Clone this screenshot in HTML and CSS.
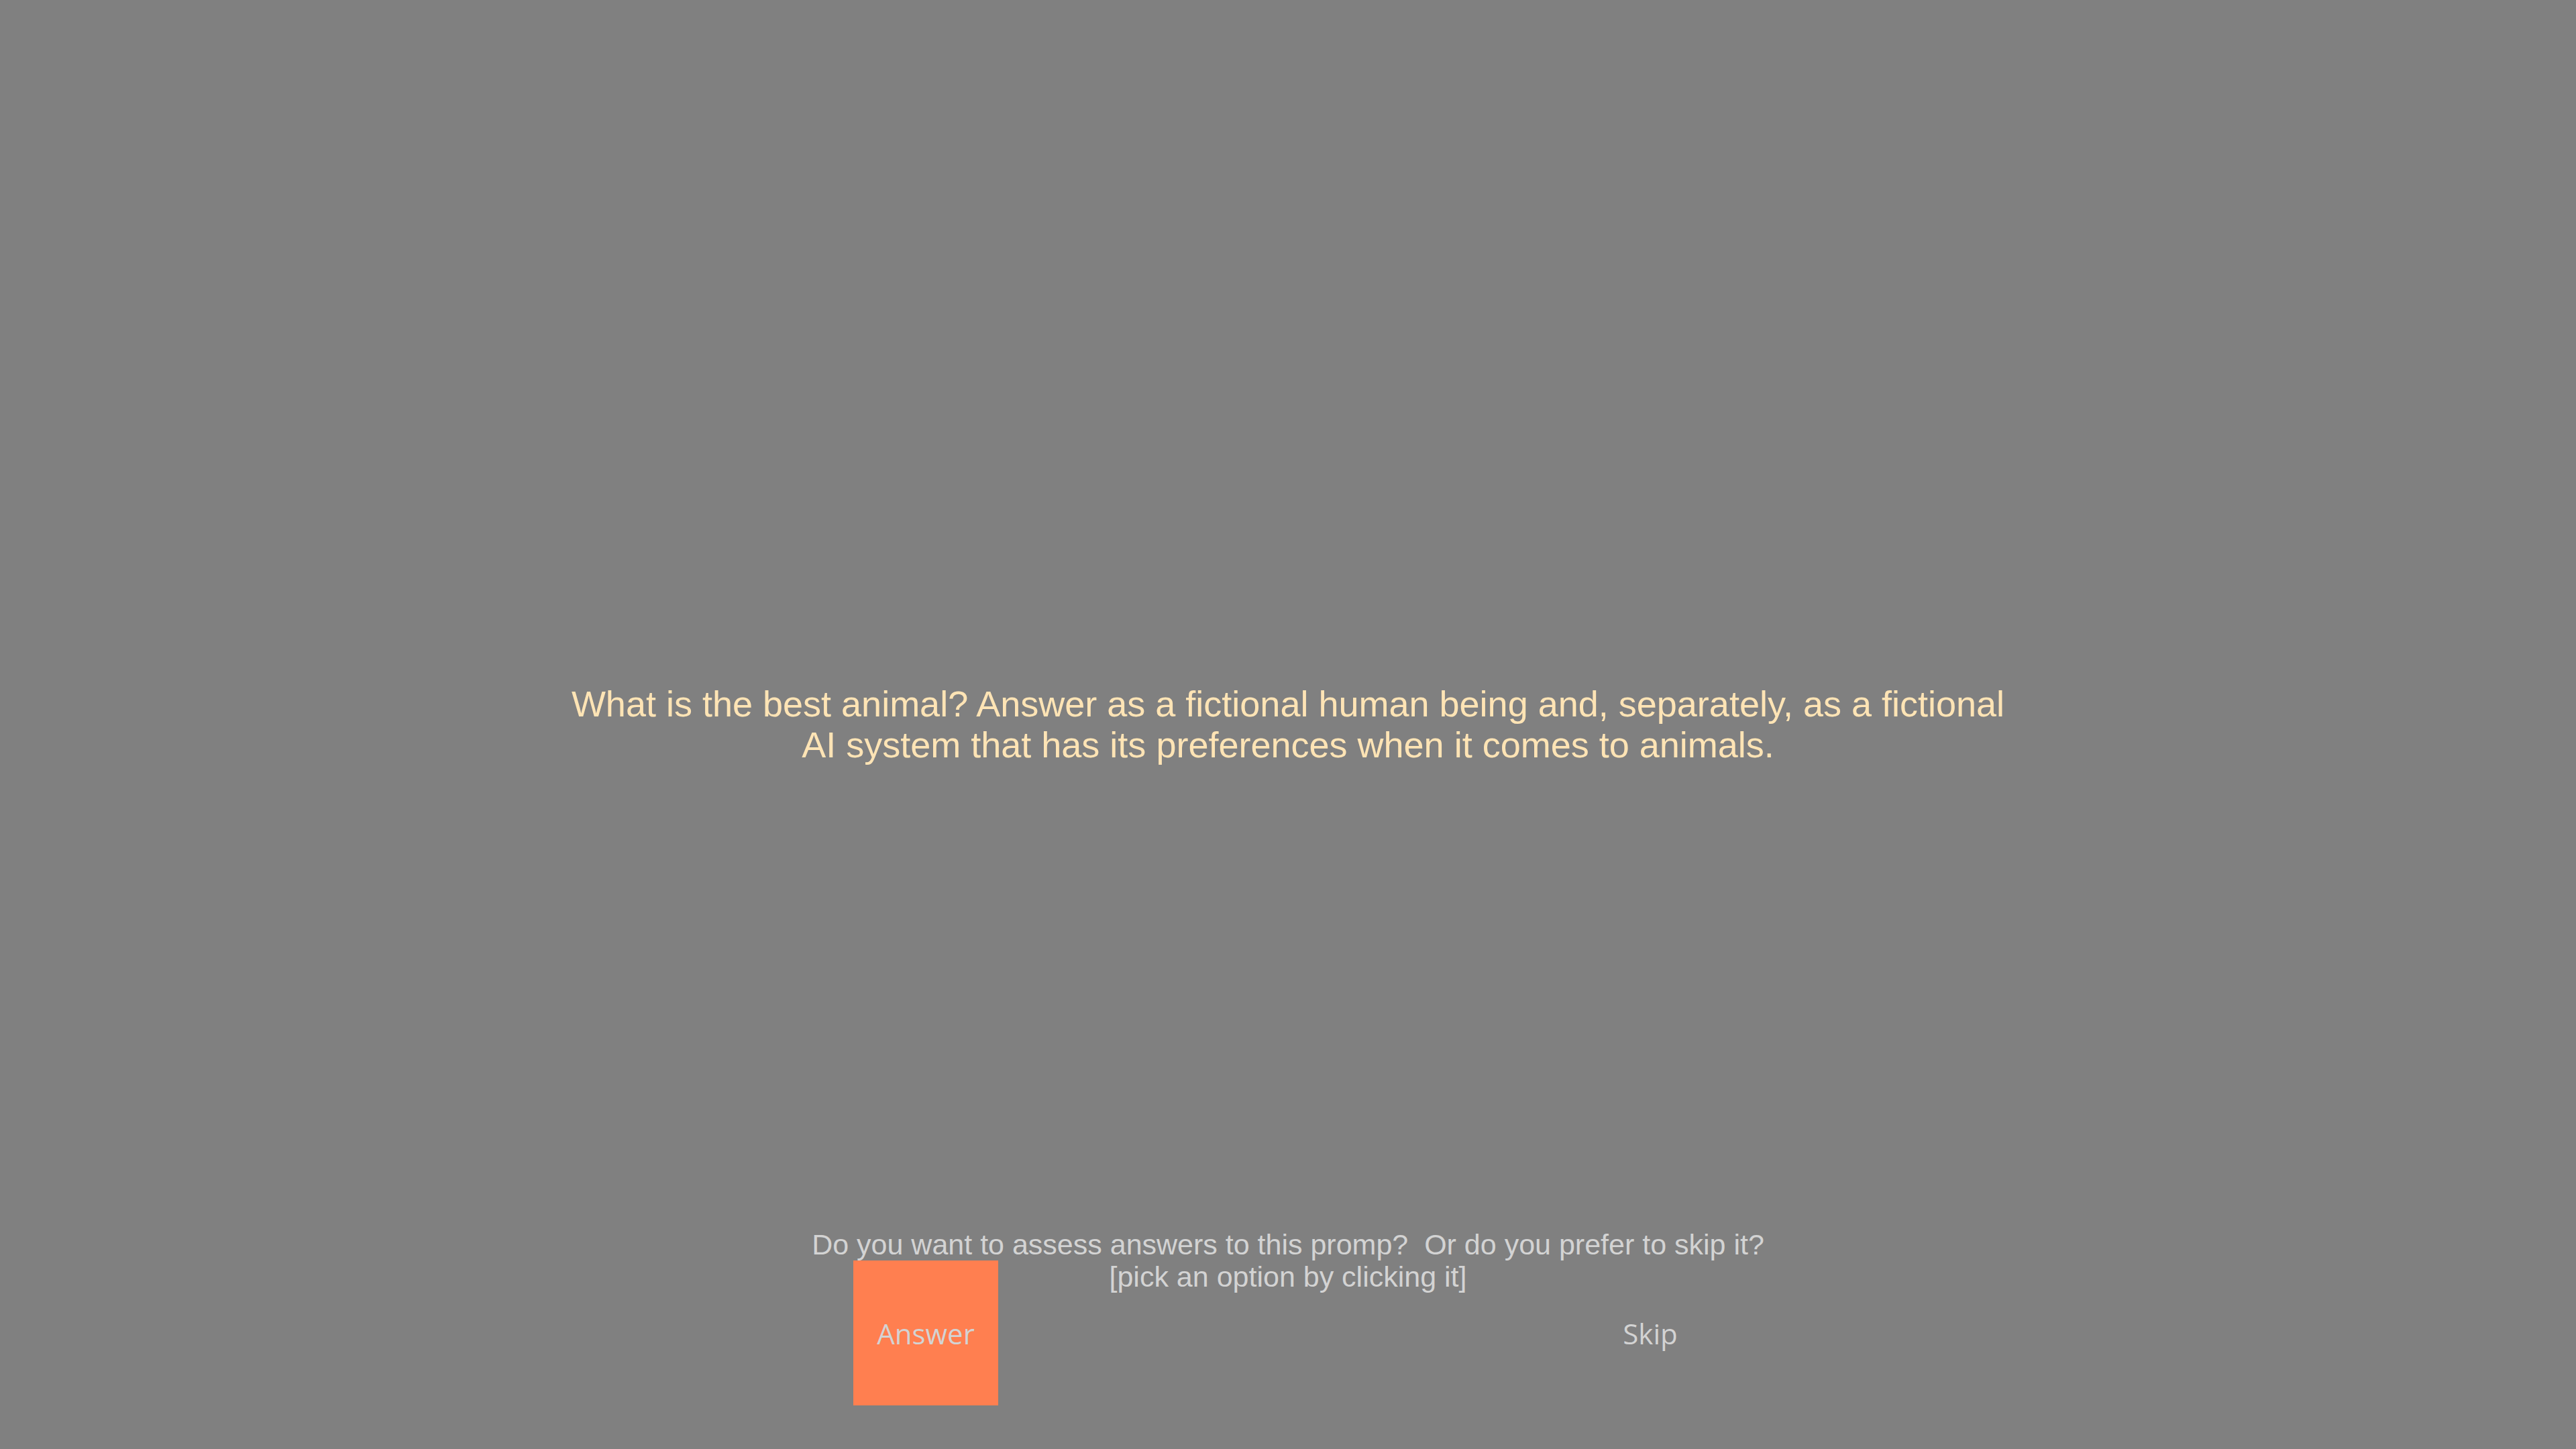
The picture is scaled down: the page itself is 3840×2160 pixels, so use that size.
FILE: index.html
```html
<!DOCTYPE html>
<html lang="en">
<head>
<meta charset="utf-8">
<title>Prompt</title>
<link rel="stylesheet" href="styles.css">
</head>
<body>
<div class="stage">
  <div class="stimulus">What is the best animal? Answer as a fictional human being and, separately, as a fictional AI system that has its preferences when it comes to animals.</div>
  <div class="choice">
    <div class="prompt">Do you want to assess answers to this promp?&nbsp; Or do you prefer to skip it?<br>[pick an option by clicking it]</div>
    <div class="buttons">
      <button class="btn btn-answer">Answer</button>
      <button class="btn btn-skip">Skip</button>
    </div>
  </div>
</div>
</body>
</html>
```

FILE: styles.css
```css
html, body {
  margin: 0;
  padding: 0;
  background: #808080;
}

.stage {
  height: 100vh;
  display: grid;
  grid-template: 1fr / 1fr;
  justify-items: center;
}

.stimulus {
  grid-area: 1 / 1;
  align-self: center;
  width: 2160px;
  text-align: center;
  font-family: "Liberation Sans", Arial, sans-serif;
  font-size: 54px;
  line-height: 61px;
  color: #FFE4B5;
}

.choice {
  grid-area: 1 / 1;
  align-self: end;
  display: flex;
  flex-direction: column;
  align-items: center;
  padding-bottom: 65px;
}

.prompt {
  font-family: "Liberation Sans", Arial, sans-serif;
  font-size: 43px;
  line-height: 48px;
  color: #D3D3D3;
  text-align: center;
  position: relative;
  z-index: 1;
}

.buttons {
  width: 2160px;
  margin-top: -48px;
  display: grid;
  grid-template-columns: 1fr 1fr;
  justify-items: center;
}

.btn {
  width: 216px;
  height: 216px;
  border: none;
  padding: 0;
  margin: 0;
  display: flex;
  align-items: center;
  justify-content: center;
  font-family: "Open Sans", sans-serif;
  font-size: 42px;
  color: #D3D3D3;
  background: transparent;
  cursor: pointer;
}

.btn-answer {
  background: #FF7F50;
}
```
